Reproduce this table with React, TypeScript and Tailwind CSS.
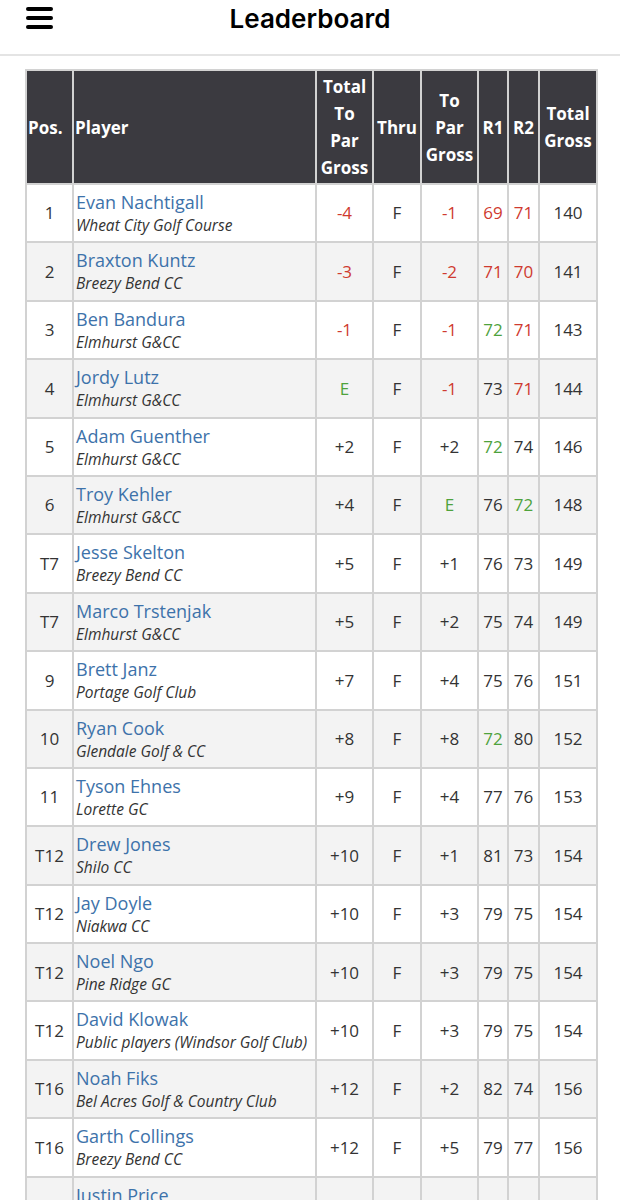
type Tone = "red" | "green" | "plain";

type Row = {
    pos: string;
    name: string;
    club: string;
    total: [string, Tone];
    thru: string;
    toPar: [string, Tone];
    r1: [string, Tone];
    r2: [string, Tone];
    gross: string;
};

const rows: Row[] = [
    { pos: "1", name: "Evan Nachtigall", club: "Wheat City Golf Course", total: ["-4", "red"], thru: "F", toPar: ["-1", "red"], r1: ["69", "red"], r2: ["71", "red"], gross: "140" },
    { pos: "2", name: "Braxton Kuntz", club: "Breezy Bend CC", total: ["-3", "red"], thru: "F", toPar: ["-2", "red"], r1: ["71", "red"], r2: ["70", "red"], gross: "141" },
    { pos: "3", name: "Ben Bandura", club: "Elmhurst G&CC", total: ["-1", "red"], thru: "F", toPar: ["-1", "red"], r1: ["72", "green"], r2: ["71", "red"], gross: "143" },
    { pos: "4", name: "Jordy Lutz", club: "Elmhurst G&CC", total: ["E", "green"], thru: "F", toPar: ["-1", "red"], r1: ["73", "plain"], r2: ["71", "red"], gross: "144" },
    { pos: "5", name: "Adam Guenther", club: "Elmhurst G&CC", total: ["+2", "plain"], thru: "F", toPar: ["+2", "plain"], r1: ["72", "green"], r2: ["74", "plain"], gross: "146" },
    { pos: "6", name: "Troy Kehler", club: "Elmhurst G&CC", total: ["+4", "plain"], thru: "F", toPar: ["E", "green"], r1: ["76", "plain"], r2: ["72", "green"], gross: "148" },
    { pos: "T7", name: "Jesse Skelton", club: "Breezy Bend CC", total: ["+5", "plain"], thru: "F", toPar: ["+1", "plain"], r1: ["76", "plain"], r2: ["73", "plain"], gross: "149" },
    { pos: "T7", name: "Marco Trstenjak", club: "Elmhurst G&CC", total: ["+5", "plain"], thru: "F", toPar: ["+2", "plain"], r1: ["75", "plain"], r2: ["74", "plain"], gross: "149" },
    { pos: "9", name: "Brett Janz", club: "Portage Golf Club", total: ["+7", "plain"], thru: "F", toPar: ["+4", "plain"], r1: ["75", "plain"], r2: ["76", "plain"], gross: "151" },
    { pos: "10", name: "Ryan Cook", club: "Glendale Golf & CC", total: ["+8", "plain"], thru: "F", toPar: ["+8", "plain"], r1: ["72", "green"], r2: ["80", "plain"], gross: "152" },
    { pos: "11", name: "Tyson Ehnes", club: "Lorette GC", total: ["+9", "plain"], thru: "F", toPar: ["+4", "plain"], r1: ["77", "plain"], r2: ["76", "plain"], gross: "153" },
    { pos: "T12", name: "Drew Jones", club: "Shilo CC", total: ["+10", "plain"], thru: "F", toPar: ["+1", "plain"], r1: ["81", "plain"], r2: ["73", "plain"], gross: "154" },
    { pos: "T12", name: "Jay Doyle", club: "Niakwa CC", total: ["+10", "plain"], thru: "F", toPar: ["+3", "plain"], r1: ["79", "plain"], r2: ["75", "plain"], gross: "154" },
    { pos: "T12", name: "Noel Ngo", club: "Pine Ridge GC", total: ["+10", "plain"], thru: "F", toPar: ["+3", "plain"], r1: ["79", "plain"], r2: ["75", "plain"], gross: "154" },
    { pos: "T12", name: "David Klowak", club: "Public players (Windsor Golf Club)", total: ["+10", "plain"], thru: "F", toPar: ["+3", "plain"], r1: ["79", "plain"], r2: ["75", "plain"], gross: "154" },
    { pos: "T16", name: "Noah Fiks", club: "Bel Acres Golf & Country Club", total: ["+12", "plain"], thru: "F", toPar: ["+2", "plain"], r1: ["82", "plain"], r2: ["74", "plain"], gross: "156" },
    { pos: "T16", name: "Garth Collings", club: "Breezy Bend CC", total: ["+12", "plain"], thru: "F", toPar: ["+5", "plain"], r1: ["79", "plain"], r2: ["77", "plain"], gross: "156" },
    { pos: "T16", name: "Justin Price", club: "Elmhurst G&CC", total: ["+12", "plain"], thru: "F", toPar: ["+3", "plain"], r1: ["78", "plain"], r2: ["78", "plain"], gross: "156" },
];

const toneClass = {
    red: "text-[#cf3a2f]",
    green: "text-[#4ea23c]",
    plain: "text-[#333]",
};

function Score({ value }: { value: [string, Tone] }) {
    return <td className={`border-2 border-[#d2d2d2] text-center ${toneClass[value[1]]}`}>{value[0]}</td>;
}

function Th({ children, left }: { children: React.ReactNode; left?: boolean }) {
    return (
        <th
            className={`border-2 border-[#d2d2d2] bg-[#3b3a40] px-[1px] font-bold text-white leading-[27px] ${
                left ? "text-left" : "text-center"
            }`}
        >
            {children}
        </th>
    );
}

export default function App() {
    return (
        <div className="w-[620px] min-h-[1200px] bg-white font-['Open_Sans','Liberation_Sans',sans-serif]">
            <header className="relative h-[56px] border-b-2 border-[#e4e4e4] flex justify-center pt-[3px]">
                <button className="absolute left-[26px] top-[7px] flex flex-col gap-[5px]">
                    <span className="block w-[27px] h-[4px] rounded-full bg-black" />
                    <span className="block w-[27px] h-[4px] rounded-full bg-black" />
                    <span className="block w-[27px] h-[4px] rounded-full bg-black" />
                </button>
                <h1 className="font-['Inter',sans-serif] text-[26px] font-semibold text-black leading-[32px]">
                    Leaderboard
                </h1>
            </header>

            <div className="pt-[13px] pl-[25px]">
                <table className="table-fixed border-collapse w-[571px] text-[17px]">
                    <colgroup>
                        <col className="w-[47px]" />
                        <col className="w-[243px]" />
                        <col className="w-[57px]" />
                        <col className="w-[48px]" />
                        <col className="w-[57px]" />
                        <col className="w-[30px]" />
                        <col className="w-[31px]" />
                        <col className="w-[58px]" />
                    </colgroup>
                    <thead>
                        <tr className="h-[114px] text-[17px]">
                            <Th left>Pos.</Th>
                            <Th left>Player</Th>
                            <Th>Total To Par Gross</Th>
                            <Th>Thru</Th>
                            <Th>To Par Gross</Th>
                            <Th>R1</Th>
                            <Th>R2</Th>
                            <Th>Total Gross</Th>
                        </tr>
                    </thead>
                    <tbody>
                        {rows.map((r, i) => (
                            <tr key={i} className={`h-[58.4px] ${i % 2 === 1 ? "bg-[#f3f3f3]" : "bg-white"}`}>
                                <td className="border-2 border-[#d2d2d2] text-center text-[#333]">{r.pos}</td>
                                <td className="border-2 border-[#d2d2d2] px-[2px] align-top pt-[5px]">
                                    <div className="text-[18px] text-[#3d72aa] leading-[24px] whitespace-nowrap">
                                        {r.name}
                                    </div>
                                    <div className="text-[15.5px] italic text-[#333] leading-[23px] whitespace-nowrap">
                                        {r.club}
                                    </div>
                                </td>
                                <Score value={r.total} />
                                <td className="border-2 border-[#d2d2d2] text-center text-[#333]">{r.thru}</td>
                                <Score value={r.toPar} />
                                <Score value={r.r1} />
                                <Score value={r.r2} />
                                <td className="border-2 border-[#d2d2d2] text-center text-[#333]">{r.gross}</td>
                            </tr>
                        ))}
                    </tbody>
                </table>
            </div>
        </div>
    );
}
